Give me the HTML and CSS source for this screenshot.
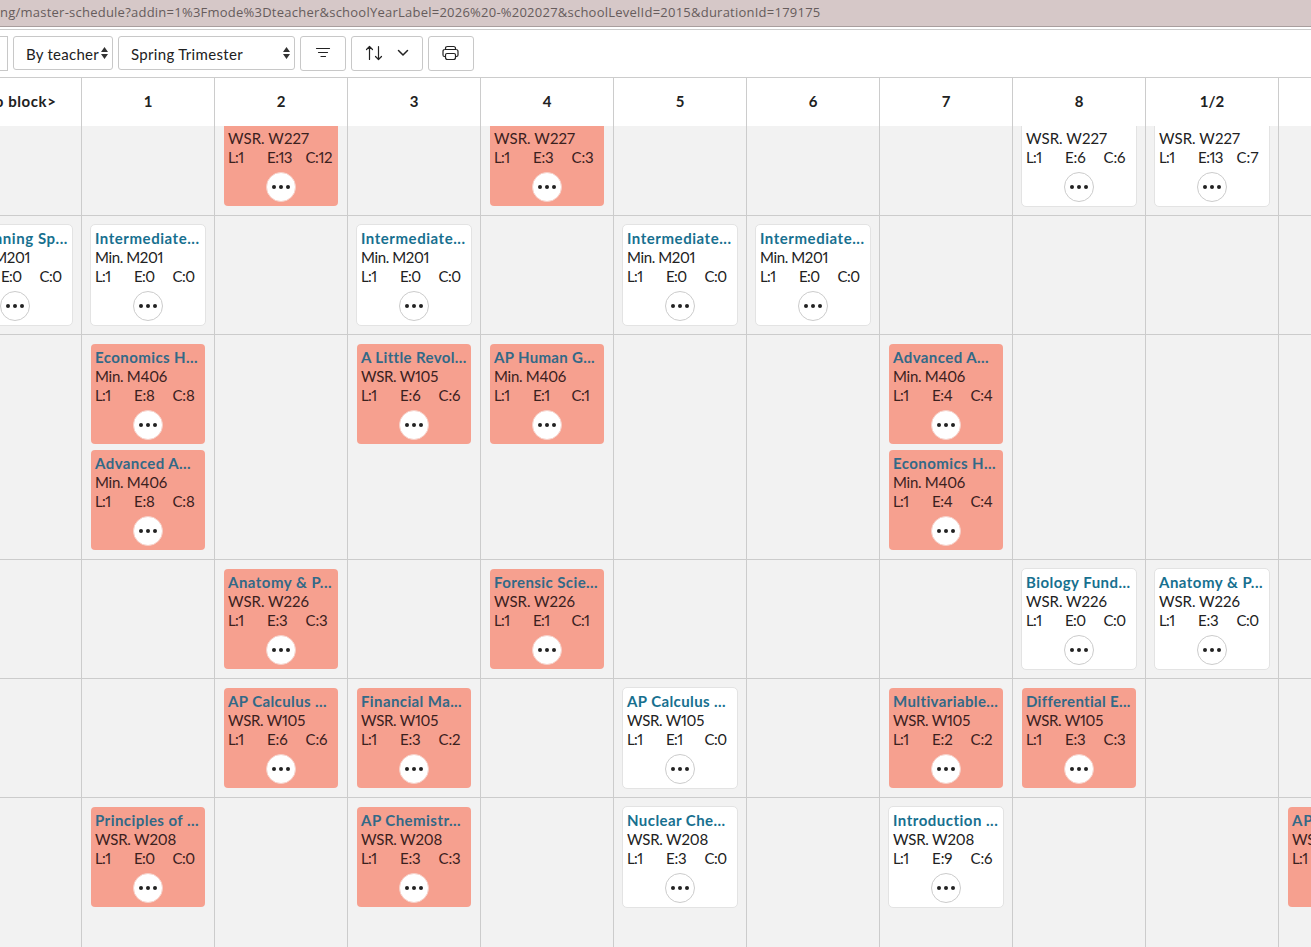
FILE: index.html
```html
<!DOCTYPE html>
<html lang="en">
<head>
<meta charset="utf-8">
<title>Master schedule</title>
<link rel="stylesheet" href="styles.css">
</head>
<body>
<div class="address"><span class="url" data-width="820.5">ng/master-schedule?addin=1%3Fmode%3Dteacher&amp;schoolYearLabel=2026%20-%202027&amp;schoolLevelId=2015&amp;durationId=179175</span></div>
<div class="toolbar">
  <div class="control previous"></div>
  <div class="control select by"><span data-width="73">By teacher</span><svg class="arrows" width="7" height="12" viewBox="0 0 7 12"><path d="M3.5 0 7 5H0zM3.5 12 0 7h7z"/></svg></div>
  <div class="control select term"><span data-width="112">Spring Trimester</span><svg class="arrows" width="7" height="12" viewBox="0 0 7 12"><path d="M3.5 0 7 5H0zM3.5 12 0 7h7z"/></svg></div>
  <div class="control button filter"><svg class="icon" width="16" height="12" viewBox="0 0 16 12"><path d="M1.500 1.500h13M3.500 5.500h9M6 9.500h4.500"/></svg></div>
  <div class="control button sort"><svg class="icon" width="18" height="16" viewBox="0 0 18 16"><path d="M4.500 14.500V1.500M1.500 4.500l3-3 3 3M13.500 1.500v13M10.500 11.500l3 3 3-3"/></svg><svg class="icon chevron" width="12" height="8" viewBox="0 0 12 8"><path d="m1.500 1.500 4.500 4.500 4.500-4.500"/></svg></div>
  <div class="control button print"><svg class="icon" width="17" height="16" viewBox="0 0 17 16"><path d="M3.500 4.500V3.500q0-2 2-2h6q2 0 2 2v1M3.500 11.500h-1Q1 11.500 1 10V6.500q0-2 2-2h11q2 0 2 2V10q0 1.500-1.500 1.500h-1M5 8.500h7q1.500 0 1.500 1.500V12.500q0 2-2 2h-6q-2 0-2-2V10Q3.500 8.500 5 8.500z"/></svg></div>
</div>
<div class="heads" id="heads"></div>
<div class="body"><div class="rows" id="rows"></div></div>
<script src="schedule.js"></script>
</body>
</html>
```
FILE: styles.css
```css
* { box-sizing: border-box; }
body {
  margin: 0;
  height: 947px;
  overflow: hidden;
  display: flex;
  flex-direction: column;
  background: #fff;
  color: #212121;
  font-family: Lato, "Liberation Sans", sans-serif;
  font-size: 15px;
}
.address {
  flex: none;
  height: 27px;
  padding-left: 0;
  background: #d6c8c8;
  border-bottom: 1px solid #a99e9e;
  color: #665c5c;
  font: 13px/25px "Open Sans", "Noto Sans", sans-serif;
  white-space: nowrap;
}
.toolbar {
  flex: none;
  height: 48px;
  margin-top: 2px;
  padding-top: 6px;
  border-top: 1px solid #ccc;
  display: flex;
  align-items: flex-start;
}
.control {
  flex: none;
  height: 35px;
  border: 1px solid #c8c8c8;
  border-radius: 3px;
  display: flex;
  align-items: center;
  white-space: nowrap;
}
.previous { width: 8px; margin-right: 5px; border-left: 0; border-radius: 0; }
.select { height: 34px; padding: 1px 4px 0 12px; justify-content: space-between; }
.by { width: 100px; margin-right: 5px; }
.term { width: 177px; margin-right: 5px; }
.arrows { fill: #333; margin-top: -2px; }
.button { justify-content: center; padding: 0 1px 1px 0; }
.icon { fill: none; stroke: #222; stroke-width: 1.2; stroke-linecap: round; stroke-linejoin: round; }
.filter { width: 46px; margin-right: 5px; }
.sort { width: 72px; margin-right: 5px; gap: 14px; }
.chevron { stroke-width: 1.5; }
.print { width: 46px; }
.heads, .row {
  display: grid;
  grid-template-columns: repeat(11, 133px);
  width: 1463px;
  margin-left: -51px;
}
.heads {
  flex: none;
  height: 49px;
  border-top: 1px solid #ccc;
  font-weight: 700;
}
.head {
  border-right: 1px solid #ccc;
  padding-bottom: 2px;
  display: flex;
  align-items: center;
  justify-content: center;
  white-space: nowrap;
}
.body { flex: 1; min-height: 0; overflow: hidden; background: #f2f2f2; }
.rows { margin-top: -29px; }
.row { border-bottom: 1px solid #ccc; min-height: 119px; }
.row:last-child { min-height: 200px; }
.cell {
  border-right: 1px solid #ccc;
  padding: 8px;
  display: flex;
  flex-direction: column;
  gap: 4px;
}
.card {
  height: 102px;
  padding: 4px 4px 0;
  border: 1px solid #e3e3e3;
  border-radius: 5px;
  background: #fff;
  line-height: 19px;
  white-space: nowrap;
  font-variant-numeric: proportional-nums;
}
.conflict { background: #f6a08f; background-clip: padding-box; border-color: transparent; color: #3b211e; }
.title { font-weight: 700; color: #17708f; }
.conflict .title { color: #326987; }
.counts { display: grid; grid-template-columns: 39px 38.5px 1fr; }
.more {
  width: 30px;
  height: 30px;
  margin: 5px auto 0;
  border: 1px solid #ccc;
  border-radius: 50%;
  background: #fff;
  display: flex;
  align-items: center;
  justify-content: center;
  gap: 3px;
}
.conflict .more { border-color: #f6d0c8; }
.dot { width: 4px; height: 4px; border-radius: 50%; background: #222; }
```
FILE: schedule.js
```js
const blocks = ["<No block>", "1", "2", "3", "4", "5", "6", "7", "8", "1/2", ""];
const roomWidths = { "Min. M201": 68, "Min. M406": 72, "WSR. W227": 81, "WSR. W105": 77, "WSR. W226": 81, "WSR. W208": 81 };

// Each section: column, title, title width, enrolled, capacity, conflict.
const rows = [
  { room: "WSR. W227", sections: [[2, "", 0, 13, 12, 1], [4, "", 0, 3, 3, 1], [8, "", 0, 6, 6, 0], [9, "", 0, 13, 7, 0]] },
  { room: "Min. M201", sections: [[0, "Beginning Sp...", 106, 0, 0, 0], [1, "Intermediate...", 104.5, 0, 0, 0], [3, "Intermediate...", 104.5, 0, 0, 0], [5, "Intermediate...", 104.5, 0, 0, 0], [6, "Intermediate...", 104.5, 0, 0, 0]] },
  { room: "Min. M406", sections: [[1, "Economics H...", 103, 8, 8, 1], [1, "Advanced A...", 96, 8, 8, 1], [3, "A Little Revol...", 105, 6, 6, 1, "WSR. W105"], [4, "AP Human G...", 101, 1, 1, 1], [7, "Advanced A...", 96, 4, 4, 1], [7, "Economics H...", 103, 4, 4, 1]] },
  { room: "WSR. W226", sections: [[2, "Anatomy & P...", 104, 3, 3, 1], [4, "Forensic Scie...", 104, 1, 1, 1], [8, "Biology Fund...", 104.5, 0, 0, 0], [9, "Anatomy & P...", 104, 3, 0, 0]] },
  { room: "WSR. W105", sections: [[2, "AP Calculus ...", 99, 6, 6, 1], [3, "Financial Ma...", 101, 3, 2, 1], [5, "AP Calculus ...", 99, 1, 0, 0], [7, "Multivariable...", 105.5, 2, 2, 1], [8, "Differential E...", 104.5, 3, 3, 1]] },
  { room: "WSR. W208", sections: [[1, "Principles of ...", 104, 0, 0, 1], [3, "AP Chemistr...", 100, 3, 3, 1], [5, "Nuclear Che...", 98.5, 3, 0, 0], [7, "Introduction ...", 105.5, 9, 6, 0], [10, "AP Physics ...", 97, 3, 3, 1]] }
];

function add(parent, cls, text) {
  const el = document.createElement("div");
  el.className = cls;
  parent.append(el);
  if (text) {
    const span = document.createElement("span");
    span.textContent = text;
    el.append(span);
    return span;
  }
  return el;
}

const digits = n => String(n).split("").reduce((w, d) => w + (d === "1" ? 4.5 : 8.5), 0);

function card(cell, room, [, title, width, enrolled, capacity, conflict]) {
  const el = add(cell, conflict ? "card conflict" : "card");
  add(el, "title", title || "Section").dataset.width = width || 60;
  add(el, "room", room).dataset.width = roomWidths[room];
  const counts = add(el, "counts");
  add(counts, "count", "L:1").dataset.width = 15.5;
  add(counts, "count", "E:" + enrolled).dataset.width = 12 + digits(enrolled);
  add(counts, "count", "C:" + capacity).dataset.width = 13.5 + digits(capacity);
  const more = add(el, "more");
  for (let i = 0; i < 3; i++) add(more, "dot");
}

blocks.forEach((b, i) => {
  const label = add(document.getElementById("heads"), "head", b);
  if (i === 0) label.dataset.width = 83;
});
rows.forEach(r => {
  const row = add(document.getElementById("rows"), "row");
  blocks.forEach((b, i) => {
    const cell = add(row, "cell");
    r.sections.filter(s => s[0] === i).forEach(s => card(cell, s[6] || r.room, s));
  });
});

// Spread each label evenly over its allotted width.
document.querySelectorAll("[data-width]").forEach(el => {
  const spare = el.dataset.width - el.getBoundingClientRect().width;
  el.style.letterSpacing = spare / el.textContent.length + "px";
});
```
